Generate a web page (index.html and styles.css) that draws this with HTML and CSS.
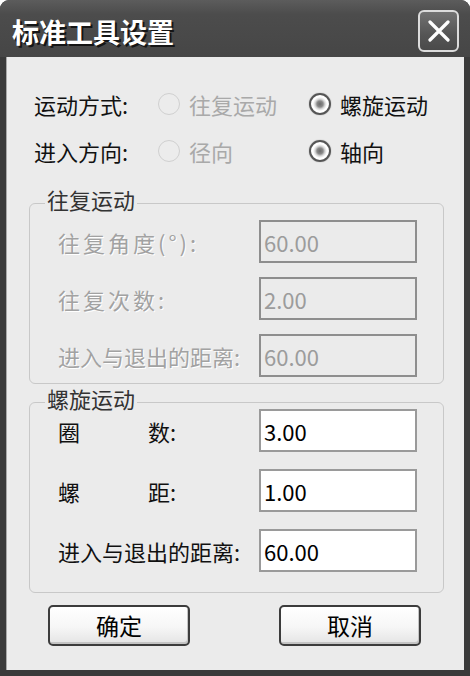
FILE: index.html
```html
<!DOCTYPE html>
<html lang="zh-CN">

<head>
    <meta charset="UTF-8">
    <meta name="viewport" content="width=device-width, initial-scale=1.0">
    <title>标准工具设置</title>
    <link rel="stylesheet" href="styles.css">
</head>

<body>

    <div class="window">
        <div class="titlebar">
            <span class="title">标准工具设置</span>
            <button class="close" type="button" aria-label="关闭">
                <svg width="22" height="22" viewBox="0 0 22 22">
                    <path d="M2 2 L20 20 M20 2 L2 20" stroke="#fff" stroke-width="3.2" stroke-linecap="round" />
                </svg>
            </button>
        </div>

        <div class="client">
            <!-- 运动方式 / 进入方向 -->
            <div class="option-row">
                <span class="option-label">运动方式:</span>
                <label class="radio disabled"><span class="dot"></span>往复运动</label>
                <label class="radio"><span class="dot checked"></span>螺旋运动</label>
            </div>
            <div class="option-row">
                <span class="option-label">进入方向:</span>
                <label class="radio disabled"><span class="dot"></span>径向</label>
                <label class="radio"><span class="dot checked"></span>轴向</label>
            </div>

            <!-- 往复运动参数（禁用） -->
            <fieldset class="group group-off">
                <legend>往复运动</legend>
                <div class="field-list">
                    <div class="field-row">
                        <span class="field-label spaced">往复角度(°):</span>
                        <input class="field" type="text" value="60.00" disabled>
                    </div>
                    <div class="field-row">
                        <span class="field-label spaced">往复次数:</span>
                        <input class="field" type="text" value="2.00" disabled>
                    </div>
                    <div class="field-row">
                        <span class="field-label">进入与退出的距离:</span>
                        <input class="field" type="text" value="60.00" disabled>
                    </div>
                </div>
            </fieldset>

            <!-- 螺旋运动参数 -->
            <fieldset class="group group-on">
                <legend>螺旋运动</legend>
                <div class="field-list">
                    <div class="field-row">
                        <span class="field-label spread"><span>圈</span><span>数:</span></span>
                        <input class="field" type="text" value="3.00">
                    </div>
                    <div class="field-row">
                        <span class="field-label spread"><span>螺</span><span>距:</span></span>
                        <input class="field" type="text" value="1.00">
                    </div>
                    <div class="field-row">
                        <span class="field-label">进入与退出的距离:</span>
                        <input class="field" type="text" value="60.00">
                    </div>
                </div>
            </fieldset>

            <div class="buttons">
                <button class="btn" type="button">确定</button>
                <button class="btn" type="button">取消</button>
            </div>
        </div>
    </div>

</body>

</html>
```

FILE: styles.css
```css
* {
    box-sizing: border-box;
}
body {
    margin: 0;
    background: #fff;
    font-family: "Noto Sans CJK SC", "Noto Sans", sans-serif;
}
.window {
    width: 470px;
    height: 676px;
    display: flex;
    flex-direction: column;
    background: #3a3a3a;
    border-radius: 9px 9px 0 0;
}

/* 标题栏 */
.titlebar {
    height: 57px;
    display: flex;
    align-items: center;
    justify-content: space-between;
    padding: 5px 11px 0 12px;
    background: linear-gradient(#5c5c5c, #4c4c4c 25%, #464646);
    border-radius: 9px 9px 0 0;
}
.title {
    color: #fff;
    font-size: 27px;
    font-weight: bold;
    line-height: 1;
    text-shadow: 2px 2px 0 #151515;
}
.close {
    width: 41px;
    height: 42px;
    padding: 0;
    display: flex;
    align-items: center;
    justify-content: center;
    border: 2px solid #dcdcdc;
    border-radius: 6px;
    background: linear-gradient(#727272, #555 60%, #4a4a4a);
}

/* 客户区 */
.client {
    flex: 1;
    margin: 0 6px 6px;
    padding: 29px 21px 0 22px;
    background: #ebebeb;
    border-left: 1px solid #a8a8a8;
    color: #111;
    font-size: 22px;
}
.option-row {
    height: 36px;
    display: flex;
    align-items: center;
    padding-left: 5px;
    line-height: 1;
}
.option-row + .option-row {
    margin-top: 11px;
}
.option-label {
    width: 124px;
}
.radio {
    display: flex;
    align-items: center;
    gap: 9px;
}
.radio.disabled {
    width: 151px;
    color: #a9a9a9;
}
.dot {
    width: 22px;
    height: 22px;
    border-radius: 50%;
    border: 1px solid #d0d0d0;
    background: #ececec;
}
.dot.checked {
    border: 2px solid #555;
    background: radial-gradient(circle, #6a6a6a 0, #8a8a8a 3px, #d8d8d8 5px, #fff 7px);
    box-shadow: 0 0 1px #777;
}

/* 分组框 */
.group {
    margin: 0;
    border: 1px solid #c8c8c8;
    border-radius: 6px;
    padding: 0 26px 0 15px;
}
.group legend {
    padding: 0 2px 8px;
    line-height: 14px;
    color: #333;
}
.group-off {
    margin-top: 23px;
    padding-top: 6px;
    padding-bottom: 6px;
}
.group-on {
    margin-top: 7px;
    padding-bottom: 20px;
}
.field-list {
    display: flex;
    flex-direction: column;
    gap: 14px;
}
.group-on .field-list {
    margin-top: -4px;
    gap: 17px;
}
.field-row {
    display: flex;
    align-items: center;
    padding-left: 13px;
}
.field-label {
    width: 201px;
    line-height: 1;
}
.spaced {
    letter-spacing: 3px;
}
.spread {
    display: flex;
    gap: 68px;
}
.group-off .field-label {
    color: #a2a2a2;
    text-shadow: 1px 1px 0 #fff;
}
.field {
    width: 158px;
    height: 43px;
    margin: 0;
    padding: 0 3px;
    border: 2px solid #9a9a9a;
    background: #fff;
    color: #000;
    font-family: "Noto Sans CJK SC", "Noto Sans", sans-serif;
    font-size: 22px;
}
.field:disabled {
    border-color: #8e8e8e;
    background: #ebebeb;
    color: #9c9c9c;
}

/* 按钮 */
.buttons {
    display: flex;
    gap: 89px;
    margin-top: 12px;
    padding-left: 19px;
}
.btn {
    width: 142px;
    height: 41px;
    padding: 0;
    border: 2px solid #3c3c3c;
    border-radius: 5px;
    background: linear-gradient(#fff, #f6f6f6 55%, #e4e4e4);
    box-shadow: inset -1px -2px 0 #c4c4c4;
    color: #000;
    font-family: "Noto Sans CJK SC", "Noto Sans", sans-serif;
    font-size: 23px;
    line-height: 1;
}
```
